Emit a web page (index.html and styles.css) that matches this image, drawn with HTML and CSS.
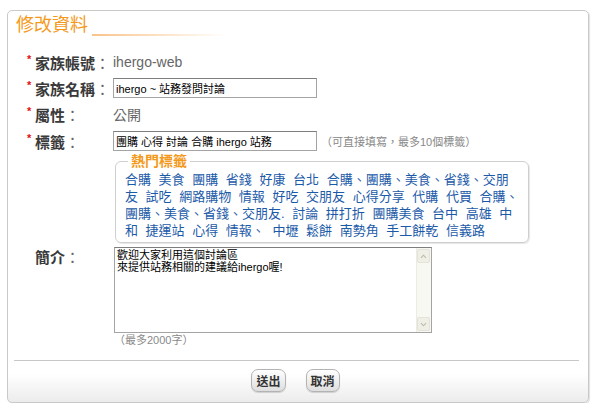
FILE: index.html
```html
<!DOCTYPE html>
<html lang="zh-Hant">
<head>
<meta charset="UTF-8" />
<title>修改資料</title>
<link rel="stylesheet" href="styles.css">
</head>
<body>
<div class="panel">
  <h2 class="panel-title">修改資料</h2>

  <form class="family-form">
    <div class="row">
      <label class="label"><span class="req">*</span>家族帳號<span class="colon">：</span></label>
      <span class="value">ihergo-web</span>
    </div>
    <div class="row">
      <label class="label"><span class="req">*</span>家族名稱<span class="colon">：</span></label>
      <input type="text" class="text-input" value="ihergo ~ 站務發問討論" />
    </div>
    <div class="row">
      <label class="label"><span class="req">*</span>屬性<span class="colon">：</span></label>
      <span class="value">公開</span>
    </div>
    <div class="row row-tags">
      <label class="label"><span class="req">*</span>標籤<span class="colon">：</span></label>
      <input type="text" class="text-input" value="團購 心得 討論 合購 ihergo 站務" />
      <span class="hint">（可直接填寫，最多10個標籤）</span>
    </div>

    
    <div class="hot-wrap">
      <fieldset class="hot-tags">
        <legend>熱門標籤</legend>
        <div class="tag-cloud">
          合購 美食 團購 省錢 好康 台北 合購、團購、美食、省錢、交朋<br>
          友 試吃 網路購物 情報 好吃 交朋友 心得分享 代購 代買 合購、<br>
          團購、美食、省錢、交朋友. 討論 拼打折 團購美食 台中 高雄 中<br>
          和 捷運站 心得 情報、 中壢 鬆餅 南勢角 手工餅乾 信義路
        </div>
      </fieldset>
    </div>

    <div class="row row-intro">
      <label class="label"><span class="req-space"></span>簡介<span class="colon">：</span></label>
      <div class="intro-box">
        <div class="intro-field">
          <textarea class="intro">歡迎大家利用這個討論區
來提供站務相關的建議給ihergo喔!</textarea>
          <!-- old-style scroll rail -->
          <div class="rail">
            <span class="rail-btn">
              <svg width="13" height="13" viewBox="0 0 13 13"><polyline points="3.5,8 6.5,5 9.5,8" fill="none" stroke="#b9b9ae" stroke-width="1.3"/></svg>
            </span>
            <span class="rail-btn">
              <svg width="13" height="13" viewBox="0 0 13 13"><polyline points="3.5,5 6.5,8 9.5,5" fill="none" stroke="#b9b9ae" stroke-width="1.3"/></svg>
            </span>
          </div>
        </div>
        <p class="note">（最多2000字）</p>
      </div>
    </div>

    <hr class="divider" />

    <div class="actions">
      <button type="submit" class="btn">送出</button>
      <button type="button" class="btn">取消</button>
    </div>
  </form>
</div>
</body>
</html>
```

FILE: styles.css
```css
* {
  box-sizing: border-box;
}

body {
  margin: 0;
  font-family: "Liberation Sans", "Noto Sans CJK TC", sans-serif;
  color: #333;
  background: #fff;
}

/* Outer rounded box */
.panel {
  width: 582px;
  height: 393px;
  margin: 10px 0 0 7px;
  border: 1px solid #c9c9c9;
  border-radius: 5px;
  box-shadow: 1px 1px 1px #e2e2e2;
  background: linear-gradient(to bottom, #fff calc(100% - 28px), #ececec);
}

/* Orange heading with a fading rule after it */
.panel-title {
  display: flex;
  align-items: flex-end;
  margin: 0;
  padding: 3px 0 0 8px;
  font-size: 18px;
  line-height: 22px;
  font-weight: normal;
  color: #f39a1c;
}

.panel-title::after {
  content: "";
  width: 134px;
  height: 2px;
  margin: 0 0 0 4px;
  background: linear-gradient(to right, #f9c48a, rgba(249, 196, 138, 0));
}

.family-form {
  margin-top: 13px;
  padding-left: 19px;
}

.row {
  display: flex;
  align-items: center;
  height: 26px;
}

.label {
  width: 86px;
  flex: none;
  font-size: 15px;
  font-weight: bold;
  color: #3a3a3a;
  white-space: nowrap;
}

.colon {
  font-weight: normal;
  color: #666;
}

.req {
  display: inline-block;
  width: 8px;
  font-size: 11px;
  color: #e01010;
  vertical-align: 6px;
}

.req-space {
  display: inline-block;
  width: 8px;
}

.value {
  font-size: 14px;
  color: #666;
}

.text-input {
  width: 204px;
  height: 20px;
  padding: 0 2px;
  border: 1px solid #a4a4a4;
  border-top-color: #7e7e7e;
  font-family: inherit;
  font-size: 11px;
  color: #000;
}

.row-tags {
  height: 24px;
  margin-top: 2px;
}

.hint {
  margin-left: 4px;
  font-size: 11px;
  color: #888;
}

/* Popular tags box */
.hot-wrap {
  padding-left: 88px;
}

.hot-tags {
  width: 414px;
  margin: 0;
  padding: 2px 8px 3px 9px;
  border: 1px solid #cfcfcf;
  border-radius: 6px;
  box-shadow: 1px 1px 1px #e6e6e6;
}

.hot-tags legend {
  margin-left: 3px;
  padding: 0 3px;
  font-size: 14px;
  line-height: 16px;
  font-weight: bold;
  color: #f39a1c;
}

.tag-cloud {
  font-size: 13px;
  line-height: 17px;
  color: #1b5aa8;
  word-spacing: 4px;
  white-space: nowrap;
}

.row-intro {
  align-items: flex-start;
  height: auto;
  margin-top: 4px;
}

.row-intro .label {
  line-height: 22px;
}

.intro-box {
  margin-left: 1px;
}

.intro-field {
  display: flex;
  width: 318px;
  height: 86px;
  border: 1px solid #a4a4a4;
  border-top-color: #7e7e7e;
  background: #fff;
}

.intro {
  flex: 1;
  min-width: 0;
  padding: 1px 2px;
  border: 0;
  font-family: inherit;
  font-size: 11px;
  line-height: 12px;
  color: #000;
  resize: none;
  overflow: hidden;
}

.rail {
  display: flex;
  flex-direction: column;
  justify-content: space-between;
  width: 15px;
  padding: 1px 1px 1px 0;
  background: #f8f8f2;
  border-left: 1px solid #ecece4;
}

.rail-btn {
  display: flex;
  height: 14px;
  background: #efefe6;
  border: 1px solid #e3e3d9;
  border-radius: 2px;
}

.note {
  margin: 1px 0 0;
  font-size: 11px;
  line-height: 12px;
  color: #8a8a8a;
}

.divider {
  margin: 14px 9px 0 -13px;
  border: 0;
  border-top: 1px solid #c8c8c8;
}

.actions {
  display: flex;
  justify-content: center;
  gap: 20px;
  margin: 8px 0 0 -19px;
  padding-right: 5px;
}

.btn {
  height: 23px;
  padding: 0 4px;
  border: 1px solid #b3b3b3;
  border-radius: 7px;
  background: linear-gradient(to bottom, #fff, #dedede);
  box-shadow: 0 1px 1px rgba(0, 0, 0, 0.15);
  font-family: inherit;
  font-size: 12px;
  font-weight: bold;
  color: #333;
  cursor: pointer;
}
```
